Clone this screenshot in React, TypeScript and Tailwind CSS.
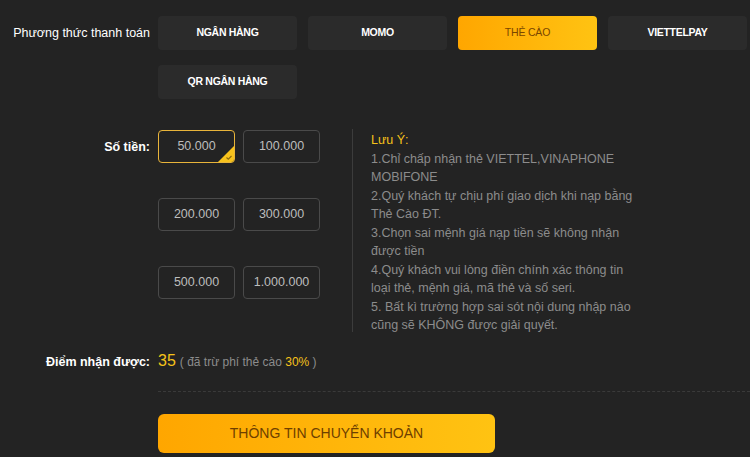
const methods = ["NGÂN HÀNG", "MOMO", "THẺ CÀO", "VIETTELPAY", "QR NGÂN HÀNG"];
const amounts = ["50.000", "100.000", "200.000", "300.000", "500.000", "1.000.000"];
const notes = [
  "1.Chỉ chấp nhận thẻ VIETTEL,VINAPHONE",
  "MOBIFONE",
  "2.Quý khách tự chịu phí giao dịch khi nạp bằng",
  "Thẻ Cào ĐT.",
  "3.Chọn sai mệnh giá nạp tiền sẽ không nhận",
  "được tiền",
  "4.Quý khách vui lòng điền chính xác thông tin",
  "loại thẻ, mệnh giá, mã thẻ và số seri.",
  "5. Bất kì trường hợp sai sót nội dung nhập nào",
  "cũng sẽ KHÔNG được giải quyết.",
];

export default function App() {
  return (
    <div className="w-[750px] h-[457px] overflow-hidden bg-[#232323] font-['Liberation_Sans',Arial,sans-serif] pt-4">
      {/* Payment method */}
      <div className="flex gap-2">
        <div className="w-[150px] shrink-0 h-[34px] flex items-center justify-end text-[12.5px] text-white">
          Phương thức thanh toán
        </div>
        <div className="grid grid-cols-[139px_139px_139px_139px] gap-x-[11px] gap-y-[15px]">
          {methods.map((m) => (
            <button
              key={m}
              className={
                m === "THẺ CÀO"
                  ? "h-[34px] rounded-[4px] bg-gradient-to-r from-[#ffa600] to-[#ffc312] text-[10.5px] tracking-[-0.2px] text-[#7a4600]"
                  : "h-[34px] rounded-[4px] bg-[#2b2b2b] text-[10.5px] tracking-[-0.3px] font-bold text-white"
              }
            >
              {m}
            </button>
          ))}
        </div>
      </div>

      {/* Amount + notes */}
      <div className="flex gap-2 mt-[31px]">
        <div className="w-[150px] shrink-0 h-[33px] pt-[1px] flex items-center justify-end text-[12.5px] font-bold text-white">
          Số tiền:
        </div>
        <div className="grid grid-cols-[77px_77px] gap-x-2 gap-y-[35px] content-start">
          {amounts.map((a, i) => (
            <button
              key={a}
              className={
                i === 0
                  ? "relative h-[33px] rounded-[4px] border border-[#e8b43a] text-[12.5px] text-[#bdbdbd] overflow-hidden"
                  : "h-[33px] rounded-[4px] border border-[#4a4a4a] text-[12.5px] text-[#bdbdbd]"
              }
            >
              {a}
              {i === 0 && (
                <span className="absolute right-0 bottom-0 w-[16px] h-[16px]">
                  <svg width="16" height="16" viewBox="0 0 16 16">
                    <path d="M16 0 L16 16 L0 16 Z" fill="#f7c21c" />
                    <path d="M8.5 11.5 L10.3 13.2 L13.5 10" stroke="#8a6a10" strokeWidth="1.2" fill="none" />
                  </svg>
                </span>
              )}
            </button>
          ))}
        </div>
        <div className="ml-[24px] -mt-[1px] h-[203px] border-l border-[#3c3c3c] pl-[18px] pt-[2px] text-[12.5px] leading-[18.5px] text-[#8c8c8c]">
          <div className="text-[#f5c21a]">Lưu Ý:</div>
          {notes.map((n) => (
            <div key={n}>{n}</div>
          ))}
        </div>
      </div>

      {/* Points */}
      <div className="flex gap-2 items-baseline mt-[17px]">
        <div className="w-[150px] shrink-0 text-right text-[12.5px] font-bold text-white">Điểm nhận được:</div>
        <div className="text-[12px] text-[#8c8c8c]">
          <span className="text-[16px] text-[#f5c21a] mr-1">35</span>( đã trừ phí thẻ cào{" "}
          <span className="text-[#f5c21a]">30%</span> )
        </div>
      </div>

      <div className="ml-[158px] mt-[18px] border-t border-dashed border-[#3a3a3a]" />

      <div className="ml-[158px] mt-[22px]">
        <button className="w-[337px] h-[39px] rounded-[6px] bg-gradient-to-r from-[#ffa600] to-[#ffc312] text-[14px] text-[#6e3f00]">
          THÔNG TIN CHUYỂN KHOẢN
        </button>
      </div>
    </div>
  );
}
